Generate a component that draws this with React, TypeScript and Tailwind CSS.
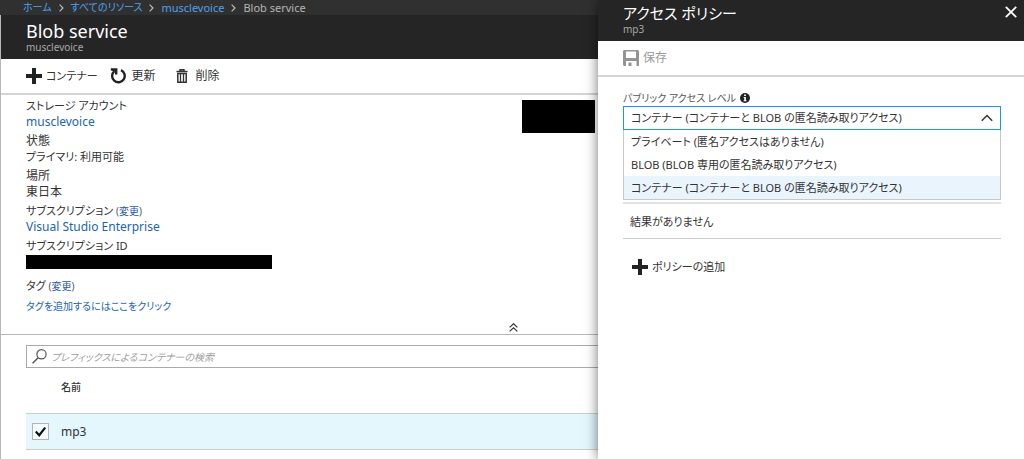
import React, { useState } from "react";

const accessLevels = [
  { id: "private", label: "プライベート (匿名アクセスはありません)" },
  { id: "blob", label: "BLOB (BLOB 専用の匿名読み取りアクセス)" },
  { id: "container", label: "コンテナー (コンテナーと BLOB の匿名読み取りアクセス)" },
];

const crumbs = ["ホーム", "すべてのリソース"];

const PlusIcon = () => (
  <svg width="16" height="16" viewBox="0 0 16 16" fill="#222">
    <path d="M6 0h4v6h6v4h-6v6H6v-6H0V6h6z" />
  </svg>
);

const RefreshIcon = () => (
  <svg width="16" height="16" viewBox="0 0 16 16" fill="none" stroke="#222">
    <path d="M11 2.2A6.3 6.3 0 1 1 4.4 3.1" strokeWidth="2.4" />
    <path d="M0.8 0.2h6.6v6.4H5V3.4L0.8 2.4z" fill="#222" stroke="none" />
  </svg>
);

const TrashIcon = () => (
  <svg width="12" height="14" viewBox="0 0 12 14" fill="none" stroke="#333">
    <path d="M0.5 2.5h11M4 2V0.7h4V2" strokeWidth="1.4" />
    <path d="M1.8 4.5h8.4v8.7H1.8z" strokeWidth="1.5" />
    <path d="M4.5 5v8M7.5 5v8" strokeWidth="1.3" />
  </svg>
);

const SaveIcon = () => (
  <svg width="16" height="16" viewBox="0 0 16 16" fill="#949494">
    <path
      fillRule="evenodd"
      d="M1 0h14l1 1v15h-2.5v-5H3v5H1l-1-1V1zM3 1.5V8h10V1.5zM5.5 12.5h3V16h-3z"
    />
  </svg>
);

const SearchIcon = () => (
  <svg width="15" height="15" viewBox="0 0 15 15" fill="none" stroke="#555">
    <circle cx="9.5" cy="5.3" r="4.6" strokeWidth="1.2" />
    <path d="M6.2 8.8L0.6 14.2" strokeWidth="1.5" />
  </svg>
);

const CloseIcon = () => (
  <svg width="12" height="12" viewBox="0 0 12 12" stroke="#fff" strokeWidth="1.8">
    <path d="M0.8 0.8l10.4 10.4M11.2 0.8L0.8 11.2" />
  </svg>
);

const CrumbArrow = () => (
  <svg width="5" height="8" viewBox="0 0 5 8" fill="none" stroke="#bbb" strokeWidth="1.2">
    <path d="M0.6 0.6L4 4 0.6 7.4" />
  </svg>
);

const Change = () => (
  <span className="text-[10px] text-[#555]">
    (<a href="#" className="text-[#2a5caa]">変更</a>)
  </span>
);

const ServiceBlade = () => {
  const [checked, setChecked] = useState(true);

  return (
    <main className="flex min-w-0 flex-1 flex-col overflow-hidden bg-white">
      <nav className="flex h-[15px] items-center gap-[7px] bg-[#303030] pl-[23px] text-[11px] leading-[15px] whitespace-nowrap">
        {crumbs.map((c) => (
          <React.Fragment key={c}>
            <a href="#" className="text-[10px] text-[#4ba3ee]">{c}</a>
            <CrumbArrow />
          </React.Fragment>
        ))}
        <a href="#" className="text-[#4ba3ee]">musclevoice</a>
        <CrumbArrow />
        <span className="text-[#b5b5b5]">Blob service</span>
      </nav>

      <div className="flex-1 border-l border-[#b8b8b8]">
        <header className="h-11 bg-[#252525] pt-1.5 pl-[25px]">
          <h1 className="text-[18px] leading-5 text-white">Blob service</h1>
          <p className="text-[10px] leading-3 text-[#a8a8a8]">musclevoice</p>
        </header>

        <div className="flex h-9 items-center border-b-2 border-[#d4d4d4] pl-[25px]">
          <button className="mr-3 flex items-center gap-1 text-[11px]"><PlusIcon />コンテナー</button>
          <button className="mr-5 flex items-center gap-1.5"><RefreshIcon />更新</button>
          <button className="flex items-center gap-2"><TrashIcon />削除</button>
        </div>

        <section className="border-b border-[#b8b8b8] pl-[25px]">
          <div className="flex justify-between">
            <dl className="flex flex-col gap-[3px] pt-[3px] leading-4">
              <div>
                <dt className="text-[11px] leading-4">ストレージ アカウント</dt>
                <dd><a href="#" className="text-[#1c64b4]">musclevoice</a></dd>
              </div>
              <div>
                <dt>状態</dt>
                <dd className="text-[11px] leading-4">プライマリ: 利用可能</dd>
              </div>
              <div>
                <dt>場所</dt>
                <dd>東日本</dd>
              </div>
              <div>
                <dt className="text-[11px] leading-4">サブスクリプション <Change /></dt>
                <dd><a href="#" className="text-[#1c64b4]">Visual Studio Enterprise</a></dd>
              </div>
              <div>
                <dt className="text-[11px] leading-4">サブスクリプション ID</dt>
                <dd className="mt-px h-3.5 w-[246px] bg-black" />
              </div>
              <div className="mt-1.5">
                <dt className="text-[11px] leading-4">タグ <Change /></dt>
                <dd className="mt-1 text-[10px] leading-4"><a href="#" className="text-[#1c64b4]">タグを追加するにはここをクリック</a></dd>
              </div>
            </dl>
            <div className="mt-[5px] mr-[3px] h-[33px] w-[73px] bg-black" />
          </div>
          <div className="flex h-5 items-center justify-end pt-1.5 pr-20">
            <button aria-label="折りたたむ">
              <svg width="9" height="9" viewBox="0 0 9 9" fill="none" stroke="#333" strokeWidth="1.2">
                <path d="M0.6 4.4l3.9-3.6 3.9 3.6M0.6 8.4l3.9-3.6 3.9 3.6" />
              </svg>
            </button>
          </div>
        </section>

        <section className="pt-2.5 pl-[25px]">
          <label className="flex h-[23px] items-center gap-1 border border-r-0 border-[#aaa] pl-[5px]">
            <SearchIcon />
            <input
              type="text"
              aria-label="コンテナーの検索"
              placeholder="プレフィックスによるコンテナーの検索"
              className="min-w-0 flex-1 text-[10px] italic outline-none placeholder:text-[#a0a0a0]"
            />
          </label>
          <table className="w-full text-left">
            <thead>
              <tr className="h-[45px] text-[10px]">
                <th className="w-[35px]" />
                <th className="pb-1.5 font-medium text-[#333]">名前</th>
              </tr>
            </thead>
            <tbody>
              <tr className="h-9 border-y border-[#ccc] bg-[#e3f7fd]">
                <td className="pl-1.5">
                  <label className="relative block size-[17px]">
                    <input
                      type="checkbox"
                      aria-label="mp3"
                      checked={checked}
                      onChange={(e) => setChecked(e.target.checked)}
                      className="block size-[17px] appearance-none border border-[#b4b4b4] bg-[#f4fbfe]"
                    />
                    {checked && (
                      <svg className="pointer-events-none absolute inset-0" width="17" height="17" viewBox="0 0 17 17" fill="none" stroke="#111" strokeWidth="2.2">
                        <path d="M3.8 8.6l3.4 3.6 6-7.6" />
                      </svg>
                    )}
                  </label>
                </td>
                <td className="pt-0.5 text-[12px]">mp3</td>
              </tr>
            </tbody>
          </table>
        </section>
      </div>
    </main>
  );
};

const PolicyBlade = () => {
  const [level, setLevel] = useState("container");

  return (
    <aside className="relative w-[426px] shrink-0 bg-white shadow-[0_0_12px_rgba(0,0,0,0.55)]">
      <header className="flex h-[41px] items-start justify-between bg-[#252525] pt-1 pr-[7px] pl-[25px]">
        <div>
          <h2 className="text-[15px] leading-[19px] text-white">アクセス ポリシー</h2>
          <p className="text-[10px] leading-3 text-[#a8a8a8]">mp3</p>
        </div>
        <button aria-label="閉じる" className="mt-0.5"><CloseIcon /></button>
      </header>

      <div className="flex h-9 items-center border-b-2 border-[#d4d4d4] pl-[25px]">
        <button className="flex items-center gap-1 text-[#999]"><SaveIcon />保存</button>
      </div>

      <div className="pt-3 pr-[23px] pl-[25px] text-[11px]">
        <div className="flex h-[17px] items-center gap-1">
          <label htmlFor="access-level" className="text-[10px] text-[#555]">パブリック アクセス レベル</label>
          <svg width="10" height="10" viewBox="0 0 10 10">
            <circle cx="5" cy="5" r="5" fill="#222" />
            <path d="M4.1 1.5h1.8v1.5H4.1zM3.7 4h2.2v3.3h.6v1H3.6v-1h.6V5h-.5z" fill="#fff" />
          </svg>
        </div>

        <div className="relative">
          <select
            id="access-level"
            value={level}
            onChange={(e) => setLevel(e.target.value)}
            className="block h-6 w-full appearance-none border border-[#1a9bdc] bg-white pl-[7px] outline-none"
          >
            {accessLevels.map((l) => (
              <option key={l.id} value={l.id}>{l.label}</option>
            ))}
          </select>
          <svg className="pointer-events-none absolute top-2 right-2" width="12" height="8" viewBox="0 0 12 8" fill="none" stroke="#333" strokeWidth="1.4">
            <path d="M0.8 6.8L6 1.4l5.2 5.4" />
          </svg>
          <ul className="absolute top-full right-0 left-0 border border-t-0 border-[#c8c8c8] bg-white">
            {accessLevels.map((l) => (
              <li key={l.id}>
                <button
                  onClick={() => setLevel(l.id)}
                  className={`block h-[23px] w-full pl-[7px] text-left ${l.id === level ? "bg-[#e9f4fd]" : ""}`}
                >
                  {l.label}
                </button>
              </li>
            ))}
          </ul>
        </div>

        <div className="mt-[72px] border-t-2 border-b border-t-[#e2e2e2] border-b-[#ccc] pt-[9px] pb-[7px] pl-[7px] leading-[18px]">
          結果がありません
        </div>
        <button className="mt-5 ml-[9px] flex items-center gap-1"><PlusIcon />ポリシーの追加</button>
      </div>
    </aside>
  );
};

const App = () => {
  return (
    <div className="flex min-h-screen overflow-hidden font-['Noto_Sans','Noto_Sans_CJK_JP',sans-serif] text-[12px] leading-4 text-[#333] [font-feature-settings:'palt']">
      <ServiceBlade />
      <PolicyBlade />
    </div>
  );
};

export default App;
